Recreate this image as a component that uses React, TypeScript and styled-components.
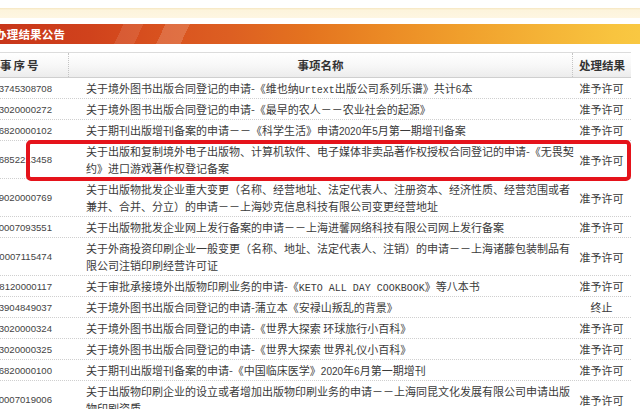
import React from "react";
import styled, { createGlobalStyle } from "styled-components";

const Global = createGlobalStyle`
  html, body { margin: 0; padding: 0; background: #fff; }
  body { font-family: "Noto Sans CJK SC", "Liberation Sans", sans-serif; color: #333; }
  * { box-sizing: border-box; }
`;

const Page = styled.div`
  width: 640px;
  height: 409px;
  overflow: hidden;
  padding-top: 8px;
`;

const NoticeBand = styled.div`
  height: 10px;
  background: linear-gradient(180deg, #f6e6c0 0px, #fdf4dc 2px, #fef6e2 100%);
`;

const TitleBar = styled.div`
  margin-top: 6px;
  height: 20px;
  display: flex;
  align-items: center;
  color: #fff;
  font-weight: bold;
  font-size: 11.5px;
  overflow: hidden;
  background:
    linear-gradient(115deg, transparent 0 112px, rgba(255,255,255,0.10) 112px 130px, transparent 130px 150px, rgba(255,255,255,0.16) 150px 172px, transparent 172px 100%),
    linear-gradient(90deg, #c8361a 0%, #d0421c 14%, #d9531f 26%, #dd5f22 36%, #e4731f 48%, #eb8a25 60%, #f09f2c 72%, #f4b236 84%, #f8c43f 96%, #f9c842 100%);
`;

const TitleText = styled.span`
  margin-left: -5px;
  letter-spacing: 0.2px;
  white-space: nowrap;
`;

const Table = styled.div`
  margin-top: 8px;
  width: 631px;
`;

const HeaderRow = styled.div`
  display: grid;
  grid-template-columns: 68px 504px 59px;
  height: 26px;
  border-top: 1px solid #dcdcdc;
  border-bottom: 1px solid #cfcfcf;
  background: linear-gradient(180deg, #ffffff 0%, #f7f7f7 55%, #ececec 100%);
`;

const HeadCell = styled.div<{ $align?: string; $sep?: boolean; $spacing?: number }>`
  display: flex;
  align-items: center;
  justify-content: ${(p) => p.$align || "center"};
  font-size: 11.5px;
  font-weight: bold;
  color: #333;
  white-space: nowrap;
  letter-spacing: ${(p) => p.$spacing || 0}px;
  border-left: ${(p) => (p.$sep ? "1px dotted #c4c4c4" : "none")};
`;

const Row = styled.div<{ $lines: number }>`
  position: relative;
  display: grid;
  grid-template-columns: 68px 504px 59px;
  height: ${(p) => p.$lines * 17 + 4}px;
  border-bottom: 1px dotted #cfcfcf;
`;

const NoCell = styled.div`
  display: flex;
  align-items: center;
  justify-content: flex-end;
  padding-right: 16px;
  overflow: hidden;
  white-space: nowrap;
  font-family: "Liberation Sans", sans-serif;
  font-size: 9.6px;
  color: #444;
`;

const TextCell = styled.div`
  padding: 2px 0 1px 18px;
  margin-right: -4px;
  font-size: 11px;
  line-height: 17px;
  color: #3a3a3a;
`;

const ResultCell = styled.div`
  display: flex;
  align-items: center;
  justify-content: center;
  font-size: 11px;
  color: #3a3a3a;
  white-space: nowrap;
`;

const Mono = styled.span`
  font-family: "Liberation Mono", monospace;
  font-size: 10px;
  line-height: 0;
`;

const Num = styled.span`
  font-family: "Liberation Sans", sans-serif;
  font-size: 10px;
  line-height: 0;
`;

const Highlight = styled.div`
  position: absolute;
  top: -1px;
  bottom: -3px;
  left: 26px;
  right: 0;
  border: 4px solid #e5131b;
  border-radius: 5px;
  pointer-events: none;
`;

type Item = { no: string; text: React.ReactNode; result: string; lines: number; mark?: boolean };

const items: Item[] = [
  {
    no: "3745308708",
    text: (
      <>
        关于境外图书出版合同登记的申请-《维也纳<Mono>Urtext</Mono>出版公司系列乐谱》共计<Num>6</Num>本
      </>
    ),
    result: "准予许可",
    lines: 1,
  },
  { no: "23020000272", text: "关于境外图书出版合同登记的申请-《最早的农人－－农业社会的起源》", result: "准予许可", lines: 1 },
  {
    no: "76820000102",
    text: (
      <>
        关于期刊出版增刊备案的申请－－《科学生活》申请<Num>2020</Num>年<Num>5</Num>月第一期增刊备案
      </>
    ),
    result: "准予许可",
    lines: 1,
  },
  {
    no: "6852213458",
    text: (
      <>
        关于出版和复制境外电子出版物、计算机软件、电子媒体非卖品著作权授权合同登记的申请-《无畏契
        <br />
        约》进口游戏著作权登记备案
      </>
    ),
    result: "准予许可",
    lines: 2,
    mark: true,
  },
  {
    no: "79020000769",
    text: "关于出版物批发企业重大变更（名称、经营地址、法定代表人、注册资本、经济性质、经营范围或者兼并、合并、分立）的申请－－上海妙克信息科技有限公司变更经营地址",
    result: "准予许可",
    lines: 2,
  },
  { no: "00007093551", text: "关于出版物批发企业网上发行备案的申请－－上海进馨网络科技有限公司网上发行备案", result: "准予许可", lines: 1 },
  {
    no: "00007115474",
    text: "关于外商投资印刷企业一般变更（名称、地址、法定代表人、注销）的申请－－上海诸藤包装制品有限公司注销印刷经营许可证",
    result: "准予许可",
    lines: 2,
  },
  {
    no: "78120000117",
    text: (
      <>
        关于审批承接境外出版物印刷业务的申请-《<Mono>KETO ALL DAY COOKBOOK</Mono>》等八本书
      </>
    ),
    result: "准予许可",
    lines: 1,
  },
  { no: "3904849037", text: "关于境外图书出版合同登记的申请-蒲立本《安禄山叛乱的背景》", result: "终止", lines: 1 },
  { no: "23020000324", text: "关于境外图书出版合同登记的申请-《世界大探索 环球旅行小百科》", result: "准予许可", lines: 1 },
  { no: "23020000325", text: "关于境外图书出版合同登记的申请-《世界大探索 世界礼仪小百科》", result: "准予许可", lines: 1 },
  {
    no: "76820000100",
    text: (
      <>
        关于期刊出版增刊备案的申请-《中国临床医学》<Num>2020</Num>年<Num>6</Num>月第一期增刊
      </>
    ),
    result: "准予许可",
    lines: 1,
  },
  {
    no: "00007019006",
    text: "关于出版物印刷企业的设立或者增加出版物印刷业务的申请－－上海同昆文化发展有限公司申请出版物印刷资质",
    result: "准予许可",
    lines: 2,
  },
];

export default function App() {
  return (
    <Page>
      <Global />
      <NoticeBand />
      <TitleBar>
        <TitleText>办理结果公告</TitleText>
      </TitleBar>
      <Table>
        <HeaderRow>
          <HeadCell $align="flex-start" $spacing={2}>事序号</HeadCell>
          <HeadCell $sep>事项名称</HeadCell>
          <HeadCell $sep>处理结果</HeadCell>
        </HeaderRow>
        {items.map((it, i) => (
          <Row key={i} $lines={it.lines}>
            <NoCell>{it.no}</NoCell>
            <TextCell>{it.text}</TextCell>
            <ResultCell>{it.result}</ResultCell>
            {it.mark && <Highlight />}
          </Row>
        ))}
      </Table>
    </Page>
  );
}
